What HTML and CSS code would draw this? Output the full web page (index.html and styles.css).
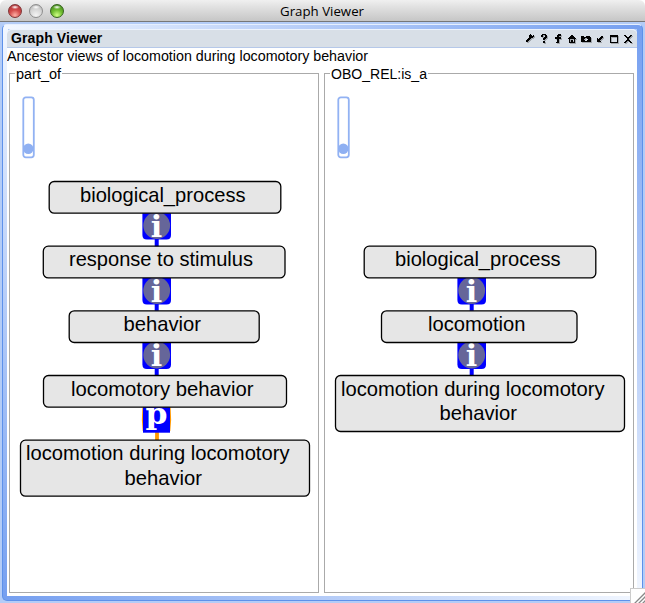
FILE: index.html
```html
<!DOCTYPE html>
<html lang="en">
<head>
<meta charset="utf-8">
<title>Graph Viewer</title>
<link rel="stylesheet" href="styles.css">
</head>
<body>
<div class="window">
  <header class="titlebar">
    <div class="lights"><i class="light red"></i><i class="light gray"></i><i class="light green"></i></div>
    <svg class="window-title" width="90" height="20"><text x="1" y="16" textLength="84" lengthAdjust="spacingAndGlyphs">Graph Viewer</text></svg>
  </header>
  <div class="desktop">
    <div class="frame">
      <main class="panel">
        <div class="panel-head">
          <h1>Graph Viewer</h1>
          <svg class="tools" width="112" height="12" viewBox="524 32 112 12" shape-rendering="crispEdges">
            <g class="tool-shadow" transform="translate(1 1)"><use href="#glyphs"/></g>
            <g id="glyphs">
              <path d="M526 41h2v-1h1v-1h1v-1h1v-1h2v-1h1v-1h-2v-1h-1v-1h-1v1h-1v3h-1v1h-1v1h-1v1h-1zM533 34h1v1h-1z"/>
              <path d="M541 34h1v-1h4v1h1v3h-1v1h-1v1h-2v-2h1v-1h1v-2h-2v2h-2zM543 40h2v2h-2z"/>
              <path d="M557 34h1v-1h3v2h-2v1h2v2h-2v4h-3v-1h1v-3h-2v-2h2z"/>
              <path fill-rule="evenodd" d="M568 38v-1h1v-1h1v-1h1v-1h2v1h1v1h1v1h1v1h-1v4h-6v-4zM570 38v3h1v-2h2v2h1v-3z"/>
              <path fill-rule="evenodd" d="M581 35h3v1h2v-1h4v1h1v5h-10zM585 37v1h-1v1h1v1h2v-1h1v-1h-1v-1z"/>
              <path d="M597 37h1v1h1v-1h1v-1h1v-1h2v2h-1v1h-1v1h-1v1h1v1h-4z"/>
              <path fill-rule="evenodd" d="M610 34h8v8h-8zM611 36v5h6v-5z"/>
              <path d="M624 34h2v1h1v1h2v-1h1v-1h2v1h-1v1h-1v1h-1v2h1v1h1v1h1v1h-2v-1h-1v-1h-2v1h-1v1h-2v-1h1v-1h1v-1h1v-2h-1v-1h-1v-1h-1z"/>
            </g>
          </svg>
        </div>
        <p class="caption"><svg width="370" height="17"><text x="0" y="13" textLength="361" lengthAdjust="spacingAndGlyphs">Ancestor views of locomotion during locomotory behavior</text></svg></p>
        <div class="views">
          <section class="view">
            <h2><svg width="47" height="18"><text x="1" y="14" textLength="45" lengthAdjust="spacingAndGlyphs">part_of</text></svg></h2>
            <svg class="graph" width="308" height="518" viewBox="10 74 308 518">
              <defs>
                <g id="is-a">
                  <path class="link" d="M0 26V34"/>
                  <path class="badge" d="M-14.3 0H14.3V22Q14.3 26.5 9.8 26.5H-9.8Q-14.3 26.5 -14.3 22Z"/>
                  <circle class="disc" cy="12.5" r="13.4"/>
                  <text class="letter" x="-.3" y="23.8" textLength="11.5" lengthAdjust="spacingAndGlyphs">i</text>
                </g>
                <g id="slider">
                  <rect class="track" x="1" y="1" width="10.5" height="60" rx="2.5"/>
                  <circle class="knob" cx="6" cy="52.5" r="5.2"/>
                </g>
              </defs>
              <use href="#slider" x="22.3" y="96.3"/>
              <use href="#is-a" x="156.7" y="213"/>
              <use href="#is-a" x="156.7" y="278"/>
              <use href="#is-a" x="156.7" y="342.5"/>
              <path class="part-link" d="M157 432V440"/>
              <path class="part-edge" d="M143.2 407Q142 420 143.5 431M169.8 407Q171 420 169.5 431"/>
              <rect class="badge" x="143" y="407" width="27" height="25.7"/>
              <text class="letter p" x="156.5" y="424.2" textLength="22" lengthAdjust="spacingAndGlyphs">p</text>
              <g class="nodes">
                <rect x="49.2" y="181.5" width="231.6" height="31.7" rx="5"/>
                <rect x="43.3" y="246.2" width="241.7" height="31.7" rx="5"/>
                <rect x="69.2" y="310.8" width="190" height="31.7" rx="5"/>
                <rect x="43.5" y="375.5" width="243" height="31.7" rx="5"/>
                <rect x="20.5" y="440.2" width="289" height="56" rx="5"/>
              </g>
              <g class="labels">
                <text x="80" y="202" textLength="165.5" lengthAdjust="spacingAndGlyphs">biological_process</text>
                <text x="69" y="266" textLength="184" lengthAdjust="spacingAndGlyphs">response to stimulus</text>
                <text x="123.5" y="331" textLength="77.5" lengthAdjust="spacingAndGlyphs">behavior</text>
                <text x="71" y="396" textLength="182.5" lengthAdjust="spacingAndGlyphs">locomotory behavior</text>
                <text x="26" y="460" textLength="263.5" lengthAdjust="spacingAndGlyphs">locomotion during locomotory</text>
                <text x="124.5" y="485" textLength="77.5" lengthAdjust="spacingAndGlyphs">behavior</text>
              </g>
            </svg>
          </section>
          <section class="view">
            <h2><svg width="98" height="18"><text x="1" y="14" textLength="96" lengthAdjust="spacingAndGlyphs">OBO_REL:is_a</text></svg></h2>
            <svg class="graph" width="308" height="518" viewBox="325 74 308 518">
              <use href="#slider" x="337.3" y="96.3"/>
              <use href="#is-a" x="471.7" y="278"/>
              <use href="#is-a" x="471.7" y="342.5"/>
              <g class="nodes">
                <rect x="364.2" y="246.2" width="231.6" height="31.7" rx="5"/>
                <rect x="381.5" y="310.8" width="195.5" height="31.7" rx="5"/>
                <rect x="335.5" y="375.5" width="289" height="56" rx="5"/>
              </g>
              <g class="labels">
                <text x="395" y="266" textLength="165.5" lengthAdjust="spacingAndGlyphs">biological_process</text>
                <text x="428" y="331" textLength="97.5" lengthAdjust="spacingAndGlyphs">locomotion</text>
                <text x="341" y="396" textLength="263.5" lengthAdjust="spacingAndGlyphs">locomotion during locomotory</text>
                <text x="439.5" y="420" textLength="77.5" lengthAdjust="spacingAndGlyphs">behavior</text>
              </g>
            </svg>
          </section>
        </div>
      </main>
    </div>
  </div>
  <svg class="grip" width="15" height="15"><path d="M3 15L15 3M7 15L15 7M11 15L15 11"/></svg>
</div>
</body>
</html>
```
FILE: styles.css
```css
* { box-sizing: border-box; }
body { margin: 0; background: #fff; font-family: "Liberation Sans", Arial, sans-serif; color: #000; }
svg { display: block; }
.window { position: relative; width: 645px; height: 603px; display: flex; flex-direction: column; overflow: hidden; }
.titlebar { height: 22px; flex: none; display: grid; grid-template-columns: 279px 1fr; align-items: start; background: linear-gradient(#f0f0f0, #e0e0e0 35%, #c6c6c6); border-bottom: 1px solid #777; border-radius: 6px 6px 0 0; }
.lights { display: flex; gap: 7px; padding: 4px 0 0 8px; }
.light { width: 14px; height: 14px; border-radius: 50%; border: 1px solid; }
.red { border-color: #803536; background: radial-gradient(ellipse 4px 2px at 50% 18%, #fff, transparent), radial-gradient(circle at 50% 85%, #ffb0a5, #d44c4b 45%, #a52c30); }
.gray { border-color: #8d8d8d; background: radial-gradient(ellipse 4px 2px at 50% 18%, #fff, transparent), radial-gradient(circle at 50% 85%, #f4f4f4, #d4d4d4 55%, #aaa); }
.green { border-color: #35631c; background: radial-gradient(ellipse 4px 2px at 50% 18%, #fff, transparent), radial-gradient(circle at 50% 85%, #d0ff85, #70bd30 45%, #397b18); }
.window-title { font: 13px "Open Sans", "Noto Sans", sans-serif; }
.desktop { flex: 1; padding: 2px; background: #b3ccf7; }
.frame { height: 577px; padding: 4px 5px 4px 4px; border: 1px solid #5d91ea; border-top-color: #e6effe; border-radius: 5px; background: linear-gradient(to right, #f2f7ff, #759ff0) 0 0 / 100% 4px no-repeat, linear-gradient(to right, #759ff0, #f2f7ff) 0 100% / 100% 5px no-repeat, linear-gradient(#f2f7ff, #759ff0) 0 0 / 5px 100% no-repeat, linear-gradient(#759ff0, #f2f7ff) 100% 0 / 5px 100% no-repeat; }
.panel { height: 567px; background: #fff; border-radius: 5px 5px 0 0; }
.panel-head { height: 19px; display: flex; justify-content: space-between; align-items: center; padding: 0 1px 0 4px; background: #d8dfe7; border-top: 1px solid #edf3fd; border-bottom: 1px solid #b5c8e9; border-radius: 5px 5px 0 0; }
h1 { margin: 0; font-size: 14px; line-height: 17px; letter-spacing: .12px; }
.tool-shadow { opacity: .25; }
.caption { margin: 0; height: 17px; font-size: 14px; }
.views { display: grid; grid-template-columns: 310px 310px; column-gap: 5px; padding: 8px 0 0 2px; }
.view { position: relative; height: 520px; border: 1px solid #aaa; }
.view h2 { position: absolute; left: 5px; top: -9px; margin: 0; background: #fff; font-size: 14px; font-weight: 400; }
.track { fill: #fff; stroke: #92b2f3; stroke-width: 1.8; }
.knob { fill: #8fb0f2; }
.link { stroke: #00f; stroke-width: 4; }
.part-link { stroke: #f90; stroke-width: 3.8; }
.part-edge { fill: none; stroke: #f90; stroke-width: 1.6; }
.badge { fill: #00f; }
.disc { fill: #669; }
.letter { font: bold 30px "DejaVu Serif", serif; fill: #fff; text-anchor: middle; }
.nodes { fill: #e6e6e6; stroke: #000; stroke-width: 1.3; }
.labels { font-size: 20.7px; }
.grip { position: absolute; right: 0; bottom: 0; background: #fff; border: solid #ccc; border-width: 1px 0 0 1px; fill: none; stroke: #888; stroke-width: 1.3; }
```
